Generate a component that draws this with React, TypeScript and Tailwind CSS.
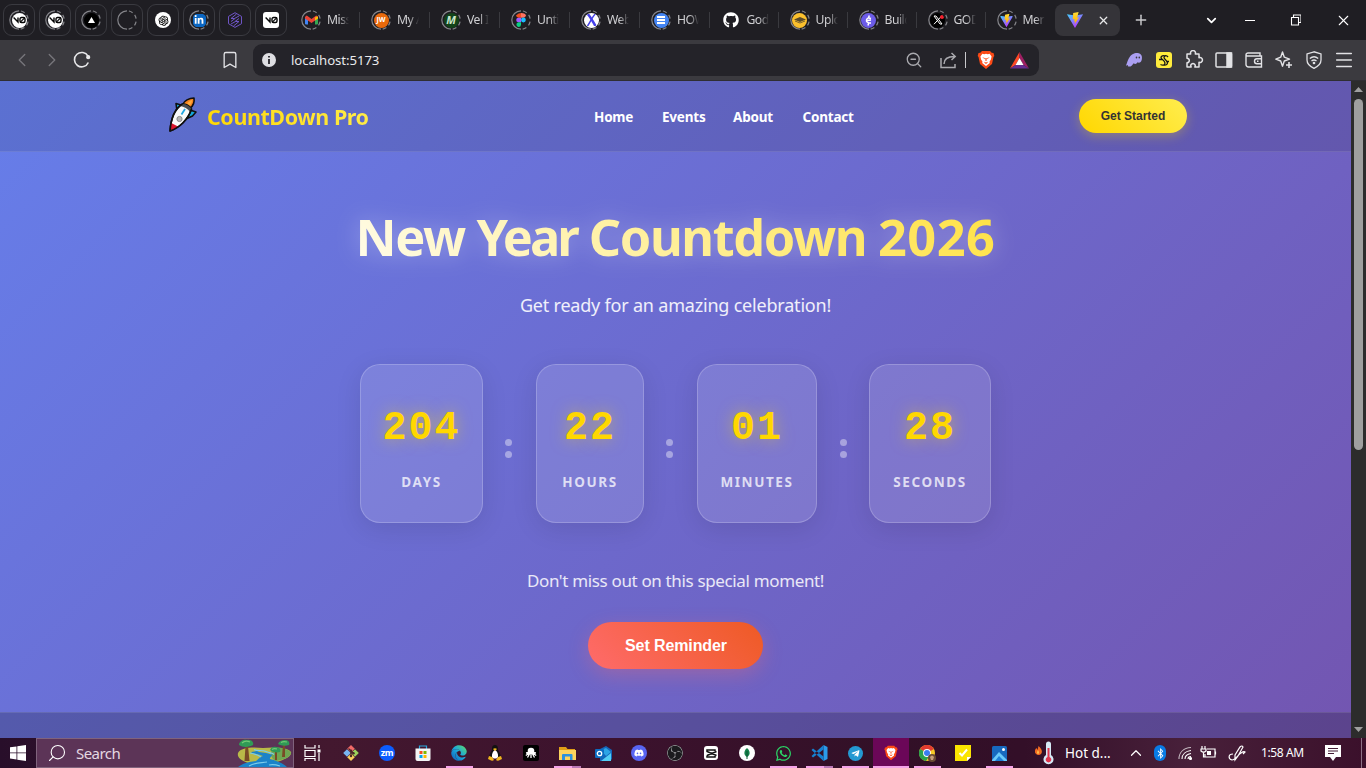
import React from "react";
import { Bookmark, ChevronLeft, ChevronRight, ChevronDown, ChevronUp, X, Plus, ZoomOut, Menu, Search } from "lucide-react";
import { FaGithub, FaLinkedinIn, FaWhatsapp, FaTelegramPlane, FaDiscord, FaBluetoothB, FaEdge } from "react-icons/fa";
import { AiOutlineOpenAI } from "react-icons/ai";
import { SiObsstudio } from "react-icons/si";

const SANS = "font-['Noto_Sans','Open_Sans',sans-serif]";

function Ring({ children }: { children?: React.ReactNode }) {
  return (
    <span className="relative flex h-5 w-5 shrink-0 items-center justify-center">
      <svg className="absolute inset-0" width="20" height="20" viewBox="0 0 20 20" fill="none" stroke="#85858a" strokeWidth="1.2">
        <path d="M10 .8a9.2 9.2 0 0 0 0 18.4" />
        <path d="M10 .8a9.2 9.2 0 0 1 0 18.4" strokeDasharray="4 3" strokeDashoffset="-2" />
      </svg>
      <span className="relative flex h-[15px] w-[15px] items-center justify-center overflow-hidden rounded-full">{children}</span>
    </span>
  );
}

function V0() {
  return (
    <svg width="13" height="8" viewBox="0 0 13 8" fill="none" stroke="#050505" strokeWidth="1.400">
      <path d="M.6 1.500 5 6V1.500" />
      <rect x="7" y="1.500" width="5" height="5" rx="1.500" />
      <path d="m7.300 6.200 4.400-4.400" strokeWidth="1.200" />
    </svg>
  );
}

function Vite({ size = 18 }: { size?: number }) {
  return (
    <svg width={size} height={size} viewBox="0 0 20 20">
      <defs>
        <linearGradient id="vg" x1="0" y1="0" x2=".6" y2="1"><stop stopColor="#41d1ff" /><stop offset="1" stopColor="#bd34fe" /></linearGradient>
        <linearGradient id="vy" x1="0" y1="0" x2="0" y2="1"><stop stopColor="#ffdd35" /><stop offset="1" stopColor="#ffa800" /></linearGradient>
      </defs>
      <path d="M1 3.500 10 5l9-1.500L10 19z" fill="url(#vg)" />
      <path d="m14 1-6 1.200-.5 7 2-.4-.6 3 1.300-.4-.7 3.200L14.500 7l-2.200.4z" fill="url(#vy)" />
    </svg>
  );
}

function BraveLion({ size = 20 }: { size?: number }) {
  return (
    <svg width={size} height={size} viewBox="0 0 20 20">
      <path d="M6 1h8l1.700 1.800L17.500 3l.8 3-.8 1-1.500 7L10 19l-6-5-1.500-7-.8-1 .8-3 1.800-.2z" fill="#fb4a16" />
      <path d="m6.400 3.800 1.800.5L10 3.800l1.800.5 1.800-.5 2 2.600-.7 3.100-1.400 2.300.3 1.200L10 16l-3.800-3 .3-1.200-1.400-2.300-.7-3.100z" fill="#fff" />
      <path d="m6.200 7.300 2.500.7.200 1.200zM13.800 7.300l-2.500.7-.2 1.200zM9.300 8h1.400l-.2 3h-1zM8 11.700l2 .9 2-.9-.8 1.300-1.200.9-1.200-.9z" fill="#fb4a16" />
    </svg>
  );
}

function Pin({ children }: { children?: React.ReactNode }) {
  return <div className="flex h-8 w-8 items-center justify-center rounded-[9px] border border-[#3a3a40]">{children}</div>;
}

function Tab({ label, children, wide, last }: { label: string; children: React.ReactNode; wide?: boolean; last?: boolean }) {
  return (
    <div className={(wide ? "w-[70px]" : "w-[69px]") + " flex h-10 shrink-0 items-center pl-[11px]"}>
      {children}
      <span className="ml-[6px] w-[22px] overflow-hidden whitespace-nowrap text-[12.2px] tracking-[-0.500px] text-[#cfcfd2] [mask-image:linear-gradient(90deg,black_55%,transparent)]">{label}</span>
      {!last && <span className="ml-auto h-4 w-px bg-[#3a3a3f]" />}
    </div>
  );
}

function TabStrip() {
  return (
    <div className="flex h-10 bg-[#1f1e23]">
      <div className="flex items-center gap-1 pl-[3px]">
        <Pin><Ring><span className="flex h-full w-full items-center justify-center bg-white"><V0 /></span></Ring></Pin>
        <Pin><Ring><span className="flex h-full w-full items-center justify-center bg-white"><V0 /></span></Ring></Pin>
        <Pin><Ring><span className="flex h-full w-full items-center justify-center bg-black"><svg width="7" height="6"><path d="M3.500 0 7 6H0z" fill="#fff" /></svg></span></Ring></Pin>
        <Pin><Ring /></Pin>
        <Pin><span className="flex h-4 w-4 items-center justify-center rounded-full bg-white text-[13px] text-black"><AiOutlineOpenAI /></span></Pin>
        <Pin><Ring><span className="flex h-[13px] w-[13px] items-center justify-center rounded-[2px] bg-[#0a66c2] text-[10px] text-white"><FaLinkedinIn /></span></Ring></Pin>
        <Pin>
          <svg width="16" height="16" viewBox="0 0 16 16" fill="none" stroke="#6f55c6" strokeWidth="1"><path d="M8 .7 14.500 4.400v7.300L8 15.400 1.500 11.700V4.400z" /><path d="M9.500 2 4 6.500h3.500L12 4M4 9.500l4-3M12 6.500l-4 3M4 12l4.500-2.500H12L6.500 14" /></svg>
        </Pin>
        <Pin><span className="flex h-4 w-4 items-center justify-center rounded-[3px] bg-white"><V0 /></span></Pin>
      </div>
      <div className="flex pl-[3px]">
        <Tab wide label="Miss">
          <Ring><svg width="13" height="11" viewBox="0 0 13 11"><path d="M0 2v7.500h3V4.500z" fill="#4285f4" /><path d="M13 2v7.500h-3V4.500z" fill="#34a853" /><path d="M0 1.500 1.800.5 6.500 4 11.200.5 13 1.500v2L6.500 8 0 3.500z" fill="#ea4335" /><path d="M10 2.500 13 1v2.500L10 5.500z" fill="#fbbc04" /></svg></Ring>
        </Tab>
        <Tab wide label="My A"><Ring><span className="flex h-full w-full items-center justify-center bg-[#e8690b] text-[7px] font-bold text-white">JW</span></Ring></Tab>
        <Tab wide label="Vel I"><Ring><span className="flex h-full w-full items-center justify-center bg-[#124319] text-[11px] font-bold italic text-[#cce6cc]">M</span></Ring></Tab>
        <Tab wide label="Unti">
          <Ring><svg width="10" height="14" viewBox="0 0 10 14"><path d="M5 0H2.500a2.300 2.300 0 0 0 0 4.700H5z" fill="#f24e1e" /><path d="M5 0h2.500a2.300 2.300 0 0 1 0 4.700H5z" fill="#ff7262" /><path d="M5 4.700H2.500a2.300 2.300 0 0 0 0 4.600H5z" fill="#a259ff" /><circle cx="7.400" cy="7" r="2.400" fill="#1abcfe" /><path d="M5 9.300H2.500A2.300 2.300 0 1 0 5 11.700z" fill="#0acf83" /></svg></Ring>
        </Tab>
        <Tab wide label="Web"><Ring><span className="flex h-full w-full items-center justify-center bg-white"><svg width="11" height="12" viewBox="0 0 11 12" fill="none" stroke="#4540e8"><path d="M1.500 0c2 1 6 9 8 12" strokeWidth="2.500" /><path d="M9.500 0c-3 2-5 8-8 12" strokeWidth="1.500" /></svg></span></Ring></Tab>
        <Tab wide label="HOW"><Ring><span className="flex h-full w-full flex-col items-center justify-center gap-[1.500px] bg-[#4485f4]"><i className="h-[1.500px] w-2 bg-white" /><i className="h-[1.500px] w-2 bg-white" /><i className="h-[1.500px] w-2 bg-white" /></span></Ring></Tab>
        <div className="-ml-[0.500px] flex">
          <Tab label="God"><FaGithub className="mx-[2px] h-4 w-4 shrink-0 text-white" /></Tab>
          <Tab label="Uplo"><Ring><span className="flex h-full w-full items-center justify-center bg-[#fbc02d]"><svg width="12" height="8"><path d="M0 3.500 6 1l6 2.500L6 6z" fill="#5b4b2a" /><path d="m1 5 5 2 5-2" stroke="#796432" fill="none" /></svg></span></Ring></Tab>
          <Tab label="Build"><Ring><span className="flex h-full w-full items-center justify-center bg-[#6c5ce7]"><svg width="7" height="11" viewBox="0 0 7 11" fill="none" stroke="#fff" strokeWidth="1.500"><path d="M6 3.500q-4-1.500-4.500 1.500T6 8M1.500 5.800 6 5M4.300.5 3.500 3M3.500 8.300 3 10.500" /></svg></span></Ring></Tab>
          <Tab label="GOD"><Ring><span className="relative flex h-full w-full items-center justify-center bg-black text-white"><svg width="10" height="10" viewBox="0 0 10 10" fill="none" stroke="#fff"><path d="M1 1h2l6 8H7zM1 9.200 8.800.8" /></svg><i className="absolute right-[1px] top-[2px] h-1 w-1 rounded-full bg-[#f4212e]" /></span></Ring></Tab>
          <Tab last label="Mer"><Ring><Vite size={15} /></Ring></Tab>
        </div>
      </div>
      <div className="my-1 ml-[0.500px] flex w-[65px] shrink-0 items-center rounded-lg bg-[#353439] pl-[11px]">
        <Vite size={18} />
        <X className="ml-[13px] text-[#e8e8ea]" size={13} strokeWidth={2.400} />
      </div>
      <div className="flex flex-1 items-center text-white">
        <Plus className="ml-[13px] text-[#c9c9cc]" size={16} strokeWidth={2.200} />
        <ChevronDown className="ml-auto mr-[26px]" size={15} strokeWidth={2.800} />
        <span className="mr-[34px] h-px w-[10px] bg-white" />
        <svg className="mr-[34px]" width="12" height="12" fill="none" stroke="#fff" strokeWidth="1.100"><path d="M2.500 3.500h7V11h-7zM4.500 3.500V1H12v7.500H9.500" /></svg>
        <X size={17} strokeWidth={1.500} className="mr-[14px]" />
      </div>
    </div>
  );
}

function ExtSlot({ children }: { children: React.ReactNode }) {
  return <span className="flex w-[30px] items-center justify-center">{children}</span>;
}

function Toolbar() {
  return (
    <div className="flex h-[41px] items-center border-b border-[#2f2e33] bg-[#3b3a3f] text-[#e2e2e5]">
      <div className="flex w-[97px] items-center pl-[7px]">
        <ExtSlot><ChevronLeft className="text-[#77767b]" size={22} strokeWidth={1.500} /></ExtSlot>
        <ExtSlot><ChevronRight className="text-[#77767b]" size={22} strokeWidth={1.500} /></ExtSlot>
        <ExtSlot><svg width="18" height="18" viewBox="0 0 18 18" fill="none" stroke="#e8e8ea" strokeWidth="1.600"><path d="M15.300 11.500A7.200 7.200 0 1 1 15 5.200" /><circle cx="15.200" cy="6.200" r="1.300" fill="#e8e8ea" /></svg></ExtSlot>
      </div>
      <div className="flex w-[156px] justify-end pr-[13px]"><Bookmark size={20} strokeWidth={1.600} /></div>
      <div className="flex h-8 w-[786px] items-center rounded-[9px] bg-[#242329] pl-[9px]">
        <span className="flex h-[14px] w-[14px] items-center justify-center rounded-full bg-[#dedee2]"><svg width="2" height="8"><path d="M0 0h2v1.600H0zM0 3h2v5H0z" fill="#35343a" /></svg></span>
        <span className="ml-[15px] mt-px whitespace-nowrap text-[13.200px] tracking-[-0.080px] text-[#e9e9ec]">localhost:5173</span>
        <ZoomOut className="ml-auto text-[#aaaaaf]" size={18} strokeWidth={1.700} />
        <svg className="ml-[17px]" width="17" height="17" viewBox="0 0 17 17" fill="none" stroke="#aaaaaf" strokeWidth="1.500"><path d="M1 6v9.500h14V12M4 12c0-5 3-7.500 10.500-7.500M11.500 1l3.700 3.500L11.500 8" /></svg>
        <span className="ml-[8px] h-4 w-px bg-[#c8c8cc]" />
        <span className="ml-[10px]"><BraveLion size={20} /></span>
        <svg className="ml-[14px] mr-[10px]" width="19" height="17" viewBox="0 0 19 17"><path d="M9.500 0v6L5.500 13 0 16.500z" fill="#ff4724" /><path d="M9.500 0 19 16.500 13.500 13 9.500 6z" fill="#9e1f63" /><path d="M0 16.500 5.500 13h8l5.500 3.500z" fill="#662d91" /><path d="m9.500 6 4 7h-8z" fill="#fff" /></svg>
      </div>
      <div className="ml-auto mr-[7px] flex items-center">
        <ExtSlot><svg width="18" height="16" viewBox="0 0 18 16"><path d="M1 13.500C2 11 2.500 9 3.500 7 6 2 9.500.8 12.500 1c4 .3 5 3.500 4.300 6.500-.6 3-2.800 4-4.300 2.800-1 1.900-2.700 2-3.800.9-1.500 2.300-3.200 3.800-5.200 3.300-1-.3-.5-1.200-.9-1.500-.5-.2-1.300 1.200-1.600.5z" fill="#ab9ff2" /><ellipse cx="11.500" cy="5.500" rx=".8" ry="1.100" fill="#3b3a3f" /><ellipse cx="14.300" cy="5.500" rx=".8" ry="1.100" fill="#3b3a3f" /></svg></ExtSlot>
        <ExtSlot><span className="flex h-4 w-4 items-center justify-center rounded-[3px] bg-[#ffec3d]"><svg width="12" height="13" viewBox="0 0 12 13" fill="none" stroke="#171717" strokeWidth="1.300"><path d="M7.500 2.500C5.500 1 3 1.800 3 3.500S7 6.500 7 9 4.500 11.500 2.500 10.500M10 3C8.500 1 6 1.500 6 3.500s3.500 3 3.500 5.200-2 2.600-3.500 2.300M1 5.500h3M8 7.500h3" /></svg></span></ExtSlot>
        <ExtSlot><svg width="20" height="20" viewBox="0 0 20 20" fill="none" stroke="#e2e2e5" strokeWidth="1.500" strokeLinejoin="round"><path d="M3 4H6.700a2.500 2.500 0 1 1 4.600 0H15v3.700a2.500 2.500 0 1 1 0 4.600V17H10.800a2.200 2.200 0 1 0-3.600 0H3V12.800a2.300 2.300 0 1 0 0-4.600z" /></svg></ExtSlot>
        <ExtSlot><svg width="18" height="16" fill="none" stroke="#e2e2e5" strokeWidth="1.500"><rect x="1" y="1" width="15.500" height="14" rx="1" /><path d="M12 1h4.500v14H12z" fill="#e2e2e5" /></svg></ExtSlot>
        <ExtSlot><svg width="18" height="16" viewBox="0 0 18 16" fill="none" stroke="#e2e2e5" strokeWidth="1.400"><path d="M15 4V1H3a2 2 0 0 0-2 2v9.500A2.500 2.500 0 0 0 3.500 15h13V4H3a1.800 1.800 0 0 1-2-1.500M17 6.700h-5a2.500 2.500 0 0 0 0 5h5M12 9.200h1.500" /></svg></ExtSlot>
        <ExtSlot><svg width="18" height="18" viewBox="0 0 18 18" fill="none" stroke="#e2e2e5" strokeWidth="1.400" strokeLinejoin="round"><path d="M7.500 1 9.300 6.200 14.500 8.200 9.300 10 7.500 15.200 5.700 10 .8 8.200 5.700 6.200z" /><path d="M14 11v6M11 14h6" strokeWidth="1.600" /></svg></ExtSlot>
        <ExtSlot><svg width="18" height="18" viewBox="0 0 18 18" fill="none" stroke="#e2e2e5" strokeWidth="1.300"><path d="M9 .8 2 3v6c0 4 3 6.500 7 8.300 4-1.800 7-4.300 7-8.300V3zM4.800 7.500c2.500-2 6-2 8.400 0M6.500 10c1.500-1.200 3.500-1.200 5 0" /><circle cx="9" cy="12" r=".7" fill="#e2e2e5" /></svg></ExtSlot>
        <ExtSlot><Menu size={22} strokeWidth={1.600} className="shrink-0" /></ExtSlot>
      </div>
    </div>
  );
}

function Rocket() {
  return (
    <svg width="30" height="36" viewBox="0 0 30 36" stroke="#101010" strokeWidth="1.600" strokeLinejoin="round">
      <path d="M15 7c1-3 6-6 11-6 .5 3.500 0 7.500-4 10z" fill="#f7831d" />
      <path d="M19 7c1-2 3-3.500 5-4 0 2-.5 4-2.500 5.500z" fill="#ffab3d" stroke="none" />
      <path d="M13 8 8 6.500 9 14zM22 13l6 2-3.500 4-5.500 2.500z" fill="#13a8dc" />
      <path d="M14.500 7C8 11 3 20 2 34c9-3 18-11 21.500-22-2-3-5-5-9-5z" fill="#fafafa" />
      <path d="M3.300 26c-.8 3-1.200 5-1.300 8 3-1.200 5-2.200 8-4.500z" fill="#d9152c" stroke="none" />
      <path d="M14.500 7c4 0 7.500 2 9 5L22 15c-2-3.500-6-5.500-10-6z" fill="#4a4d50" stroke="none" />
      <path d="m17 12-3.500 5.500" stroke="#20a6e0" strokeWidth="1.800" />
      <circle cx="11.500" cy="22" r="2.600" fill="#b5b5b5" stroke="#8a8a8a" strokeWidth="1" />
      <path d="M14.500 7C8 11 3 20 2 34c9-3 18-11 21.500-22" fill="none" />
    </svg>
  );
}

function Unit({ value, label, width }: { value: string; label: string; width: string }) {
  return (
    <div className={width + " flex h-[159px] shrink-0 flex-col items-center rounded-[20px] border border-white/20 bg-white/12 pt-[41px] shadow-[0_6px_26px_rgba(0,0,0,0.1)]"}>
      <div className="font-['Liberation_Mono',monospace] text-[40px] font-bold leading-[46px] tracking-[2px] text-[#ffd700] [text-shadow:0_0_16px_rgba(255,215,0,0.5)]">{value}</div>
      <div className="mt-[20px] whitespace-nowrap text-[13.500px] font-bold leading-[20px] tracking-[1.600px] text-white/75">{label}</div>
    </div>
  );
}

function Sep({ width = "w-[53px]", dots = "pr-[2px]" }: { width?: string; dots?: string }) {
  return (
    <div className={width + " " + dots + " flex h-[159px] flex-col items-center gap-[5px] pt-[75px]"}>
      <i className="h-[7px] w-[7px] rounded-full bg-white/40" />
      <i className="h-[7px] w-[7px] rounded-full bg-white/40" />
    </div>
  );
}

function Page() {
  return (
    <div className="flex h-[657px] w-[1351px] flex-col overflow-hidden bg-[linear-gradient(135deg,#667eea_0%,#764ba2_100%)] bg-[length:1351px_1168px]">
      <header className="flex h-[71px] shrink-0 items-center border-b border-white/10 bg-black/10 pl-[168px] pr-[164px]">
        <span className="-mt-[2px]"><Rocket /></span>
        <span className="ml-[9px] mt-[2px] w-[387px] whitespace-nowrap bg-[linear-gradient(45deg,#ffd700,#ffed4e)] bg-[length:162px_100%] bg-clip-text text-[21.500px] font-bold leading-8 tracking-[-0.430px] text-transparent">CountDown Pro</span>
        <nav className="mt-[3px] flex text-[13.500px] font-bold tracking-[-0.200px] text-white">
          <span className="w-[68px]">Home</span>
          <span className="w-[71px]">Events</span>
          <span className="w-[69.500px]">About</span>
          <span>Contact</span>
        </nav>
        <button className="ml-auto h-[34px] w-[108px] rounded-full bg-[linear-gradient(45deg,#ffd700,#ffed4e)] font-['Liberation_Sans',Arial,sans-serif] text-[12px] font-bold text-[#333] shadow-[0_3px_12px_rgba(255,215,0,0.3)]">Get Started</button>
      </header>
      <main className="flex h-[560px] shrink-0 flex-col items-center">
        <h1 className="mt-[51px] whitespace-nowrap bg-[linear-gradient(45deg,#ffffff_-12%,#ffe03a_105%)] bg-clip-text text-[50.500px] font-bold leading-[68px] tracking-[-1.400px] text-transparent [filter:drop-shadow(0_0_12px_rgba(255,255,255,0.32))]">New <span className="tracking-[-2.900px]">Year</span> Countdown <span className="tracking-[0.500px]">2026</span></h1>
        <p className="mt-[20px] whitespace-nowrap text-[18px] leading-[28px] tracking-[-0.200px] text-white/90">Get ready for an amazing celebration!</p>
        <section className="mt-[45px] flex">
          <Unit value="204" label="DAYS" width="w-[123px]" />
          <Sep />
          <Unit value="22" label="HOURS" width="w-[108px]" />
          <Sep />
          <Unit value="01" label="MINUTES" width="w-[120px]" />
          <Sep width="w-[52px]" dots="pr-0" />
          <Unit value="28" label="SECONDS" width="w-[122px]" />
        </section>
        <p className="mt-[44px] whitespace-nowrap text-[17px] leading-[28px] tracking-[-0.350px] text-white/85">Don't miss out on this special moment!</p>
        <button className="mt-[27px] h-[47px] w-[175px] rounded-full bg-[linear-gradient(45deg,#ff6b6b,#ee5a24)] pl-px font-['Liberation_Sans',Arial,sans-serif] text-[16px] font-bold tracking-[-0.100px] text-white shadow-[0_6px_20px_rgba(255,107,107,0.3)]">Set Reminder</button>
      </main>
      <footer className="flex-1 border-t border-white/10 bg-black/20" />
    </div>
  );
}

function Scrollbar() {
  return (
    <div className="flex h-[657px] w-[15px] flex-col items-center bg-[#2c2c2c]">
      <svg width="9" height="18" className="shrink-0"><path d="M4.500 6 9 11H0z" fill="#9f9f9f" /></svg>
      <div className="h-[351px] w-[9px] rounded-full bg-[#9f9f9f]" />
      <svg width="9" height="18" className="mt-auto shrink-0"><path d="M0 7h9l-4.500 5z" fill="#9f9f9f" /></svg>
    </div>
  );
}

function TaskItem({ children, line, active }: { children: React.ReactNode; line?: "one" | "two"; active?: boolean }) {
  return (
    <div className={(active ? "bg-[#6b0758]" : "") + " relative flex h-[30px] w-9 items-center justify-center"}>
      {children}
      {line && (
        <span className={(active ? "inset-x-0" : "inset-x-[4.500px]") + " absolute bottom-0 flex h-[2px]"}>
          <i className="h-full flex-1 bg-[#f4a3e8]" />
          {line === "two" && <i className="h-full w-[9px] bg-[#b978b6]" />}
        </span>
      )}
    </div>
  );
}

function Taskbar() {
  return (
    <div className="flex h-[30px] items-center bg-[linear-gradient(90deg,#280e2a_0%,#43182f_24%,#3c122d_45%,#321027_65%,#330f28_75%,#48203a_87%,#3b102b_100%)] text-white">
      <div className="flex w-[36px] justify-center"><svg width="16" height="16" viewBox="0 0 16 16" fill="#fff"><path d="M0 2.300 6.500 1.400v6H0zM7.300 1.300 16 0v7.400H7.300zM0 8.200h6.500v6.300L0 13.600zM7.300 8.200H16V16l-8.700-1.300z" /></svg></div>
      <div className="flex h-[30px] w-[258px] items-center overflow-hidden border border-[#80637d] bg-[#5c3457] pl-[10px]">
        <Search size={20} strokeWidth={1.300} className="-scale-x-100 text-white" />
        <span className="ml-[9px] mt-px text-[15px] tracking-[-0.550px] text-[#e4d8e1]">Search</span>
        <svg className="ml-auto shrink-0" width="56" height="30" viewBox="0 0 56 30">
          <path d="M1 15C4 9 16 9 26 10c10-1 24-1 28 4 1 4-5 7-11 9-8 3-24 4-32 2C3 22 0 19 1 15z" fill="#b9ba48" />
          <path d="M36 10c9-1 16 1 18 5-1 5-9 7-15 8-6-2-6-10-3-13z" fill="#6fa652" />
          <path d="M0 30c5-5 12-6 19-7 3-2 3-4 7-5-4-2-10-2-12-4l6-1c2 2 8 1 13 3 5 1-1 3 0 5 8 2 14 5 18 9z" fill="#1b83c9" />
          <path d="M17 11.500c4 2 8 0 12 2s6 1 8 3M13 15c5 1 8 2 11 4M12 28c6-4 12-3 18-4M32 27c4-1 8 0 11 1" stroke="#7bcceb" strokeWidth="1.200" fill="none" />
          <path d="M8.500 8h2.500l1.500 15H7.500zM46 6h2v13h-3zM38 14h2v8h-2z" fill="#794b26" />
          <path d="M2 7c0-4 5-6 8-5 5-1 7 3 6 5-3 2-10 3-14 0zM41 6c1-3 4-4 7-4 4 0 5 3 4 5-3 1-8 1-11-1zM33 12c1-3 4-4 6-3 4 0 5 3 4 5-3 1-8 0-10-2z" fill="#2f9a56" />
          <path d="M5 5c3-3 6-2 8-1M44 4.500c2-1.500 4-1 6-.5M35 11.500c2-1.500 3-1 5-.5" stroke="#72c775" strokeWidth="1.200" fill="none" />
        </svg>
      </div>
      <div className="flex w-[39px] justify-center pr-[2px]"><svg width="17" height="16" fill="none" stroke="#fff" strokeWidth="1.200"><path d="M1 0v3h10V0M1 5.500h10v6H1zM1 16v-2.500h10V16M15 0v3M15 8v8" /><path d="M13.500 4.500h3v3h-3z" fill="#fff" stroke="none" /></svg></div>
      <TaskItem><svg width="16" height="16" viewBox="0 0 16 16"><path d="m8 0 3.800 3.800L8 7.600 4.200 3.800z" fill="#f36a68" /><path d="m4 4.200 3.800 3.800L4 11.800.2 8z" fill="#79b5f1" /><path d="m12 4.200 3.800 3.800-3.800 3.800L8.200 8z" fill="#9bd15c" /><path d="m8 8.400 3.800 3.800L8 16l-3.800-3.800z" fill="#f7ce5c" /><path d="m5.500 3.500 5 5M8 5.500V11" stroke="#4a2426" strokeWidth="1.200" fill="none" /><circle cx="8" cy="5.800" r="1.200" fill="#4a2426" /><circle cx="10.500" cy="8.300" r="1.200" fill="#4a2426" /><circle cx="8" cy="11" r="1.200" fill="#4a2426" /></svg></TaskItem>
      <TaskItem><span className="flex h-4 w-4 items-center justify-center rounded-full bg-[#0b5cff] pb-px text-[9px] font-bold tracking-[-0.300px]">zm</span></TaskItem>
      <TaskItem><svg width="16" height="16" viewBox="0 0 16 16"><path d="M4.500 4V1h7v3" fill="none" stroke="#29a9e0" strokeWidth="1.200" /><path d="M.5 3.500h15V14a2 2 0 0 1-2 2h-11a2 2 0 0 1-2-2z" fill="#f4f5f6" /><path d="M4.500 6h3v3h-3z" fill="#f25022" /><path d="M8.500 6h3v3h-3z" fill="#7fba00" /><path d="M4.500 10h3v3h-3z" fill="#00a4ef" /><path d="M8.500 10h3v3h-3z" fill="#ffb900" /></svg></TaskItem>
      <TaskItem line="one">
        <svg width="0" height="0" className="absolute"><defs><linearGradient id="edge" x1="0" y1="1" x2="1" y2="0"><stop stopColor="#1058b8" /><stop offset=".5" stopColor="#1aa6dc" /><stop offset="1" stopColor="#62dd64" /></linearGradient></defs></svg>
        <FaEdge size={16} fill="url(#edge)" />
      </TaskItem>
      <TaskItem><svg width="14" height="16" viewBox="0 0 14 16"><path d="M7 0c3 0 3 3 3 5 1 2 3 4 2.500 8H1.500C1 9 3 7 4 5c0-2 0-5 3-5z" fill="#111" /><path d="M7 5c2 1 3.500 4 3 7-1 2-5 2-6 0-.5-3 1-6 3-7z" fill="#fff" /><path d="M5 4c1-1 3-1 4 0L7 6zM1 11l3 1 2 3c-2 1.500-4 0-6-1zM13 11l-3 1-2 3c2 1.500 4 0 6-1z" fill="#f2b61d" /></svg></TaskItem>
      <TaskItem><span className="flex h-4 w-4 items-center justify-center rounded-[2px] bg-black"><svg width="12" height="12" viewBox="0 0 12 12"><circle cx="6" cy="4" r="3.300" fill="#fff" /><path d="M6 6v5M5 6 2.500 10.500M7 6l2.500 4.500M4.500 6 .8 8.500M7.500 6l3.700 2.500M4.500 5.500 1 6M7.500 5.500 11 6" stroke="#fff" strokeWidth="1.300" /></svg></span></TaskItem>
      <TaskItem line="two"><svg width="17" height="15" viewBox="0 0 17 15"><path d="M0 1h7l1.500 2H16v6H0z" fill="#e09f17" /><path d="M0 4h17v10H0z" fill="#fbd35e" /><path d="M3 14V9q0-1 1-1h8.500q1 0 1 1v5H11v-3.500H6V14z" fill="#2a91df" /></svg></TaskItem>
      <TaskItem><svg width="17" height="15" viewBox="0 0 17 15"><path d="m5 3 6-3 6 4v9l-2 2H5z" fill="#1565b8" /><path d="m6 4 5-2 5 4-5 4z" fill="#2ca5e6" /><path d="m6 15 10-8v8z" fill="#53cff5" /><rect y="3" width="9" height="9" rx="1" fill="#0c6cc1" /><circle cx="4.500" cy="7.500" r="2.200" fill="none" stroke="#fff" strokeWidth="1.300" /></svg></TaskItem>
      <TaskItem><span className="flex h-4 w-4 items-center justify-center rounded-full bg-[#5865f2] text-[10px]"><FaDiscord /></span></TaskItem>
      <TaskItem><SiObsstudio size={16} className="rounded-full bg-[#1b1b1e] text-[#aaa9ac]" /></TaskItem>
      <TaskItem><span className="flex h-[14px] w-[14px] items-center justify-center rounded-[3px] bg-white"><svg width="11" height="9" fill="none" stroke="#111" strokeWidth="1.500"><path d="M9 2V1H1v1.500l9.500 4M1 6.500V8h8V7M1 6.500l9.500-4" /></svg></span></TaskItem>
      <TaskItem><span className="flex h-4 w-4 items-center justify-center rounded-full bg-white"><svg width="6" height="11"><path d="M3 0c4 4 3 7 0 9C0 7-1 4 3 0z" fill="#14804a" /><path d="M3 3v8" stroke="#0b5532" /></svg></span></TaskItem>
      <TaskItem line="one"><FaWhatsapp size={17} className="text-[#2bd365]" /></TaskItem>
      <TaskItem line="two"><svg width="17" height="16" viewBox="0 0 17 16"><path d="m12.500 0 4 2v12l-4 2z" fill="#2b9bea" /><path d="M12.500 0v4.500L2 12.500.5 11zM12.500 16v-4.500L2 3.500.5 5z" fill="#1681d1" /></svg></TaskItem>
      <TaskItem line="one"><span className="flex h-[15px] w-[15px] items-center justify-center rounded-full bg-[#2499d2] text-[9px]"><FaTelegramPlane /></span></TaskItem>
      <TaskItem line="one" active><BraveLion size={16} /></TaskItem>
      <TaskItem line="one"><svg width="17" height="17" viewBox="0 0 17 17"><circle cx="8" cy="8" r="8" fill="#f8c927" /><path d="M8 8 1 4A8 8 0 0 1 15 4z" fill="#e33c30" /><path d="M1 4a8 8 0 0 0 6 12l4-6-3-2z" fill="#2ba24c" /><circle cx="8" cy="8" r="3.900" fill="#fff" /><circle cx="8" cy="8" r="3" fill="#3a7df0" /><circle cx="13" cy="13" r="4" fill="#6a4c36" /><path d="M11 12q2-3 4 0l-1 3h-2z" fill="#c99f7b" /></svg></TaskItem>
      <TaskItem><svg width="16" height="16"><path d="M0 0h16v12l-4 4H0z" fill="#fbe400" /><path d="M12 16v-4h4z" fill="#fff" /><path d="m4.500 8 2.500 2.500 5-6" fill="none" stroke="#fff" strokeWidth="2" /></svg></TaskItem>
      <TaskItem line="one"><svg width="15" height="15" viewBox="0 0 15 15"><rect width="15" height="15" rx="1.500" fill="#1769bf" /><path d="m0 14 7-8 8 8v1H0z" fill="#69c9fa" /><path d="m3 15 4-5 5 5z" fill="#1c7fd8" /><circle cx="11.500" cy="3.500" r="1.500" fill="#fff" /></svg></TaskItem>
      <div className="ml-[18px] flex items-center">
        <svg width="20" height="24" viewBox="0 0 20 24"><path d="M3.500 5c5 4 4 9 0 9-4.500-.5-4.500-5-2-7l1 2z" fill="#f26a22" /><path d="M3 9q2 3 0 4-2-1 0-4z" fill="#ffc34a" /><path d="M11 3a2.500 2.500 0 0 1 5 0v11a5 5 0 1 1-5 0z" fill="#d6eaf7" /><path d="M12.500 7h2v9a2.800 2.800 0 1 1-2 0z" fill="#e0354d" /></svg>
        <span className="ml-[10px] w-[46px] whitespace-nowrap text-[13.500px]">Hot d...</span>
      </div>
      <ChevronUp className="ml-[16px]" size={18} strokeWidth={1.600} />
      <span className="ml-[9px] flex h-4 w-3 items-center justify-center rounded-full bg-[#087be5] text-[11px]"><FaBluetoothB /></span>
      <svg className="ml-[12px]" width="14" height="14" viewBox="0 0 14 14" fill="none" stroke="#fff" strokeWidth="1.100"><path d="M1 13C1 6 6 2 13 1.500" opacity=".7" /><path d="M4 13c0-5 4-8 9-8.500M7 13c0-3 3-5 6-5.500M10 13c0-1.500 1.500-2.500 3-2.500" /><circle cx="12.500" cy="12.500" r="1" fill="#fff" /></svg>
      <svg className="ml-[8px]" width="17" height="14" fill="none" stroke="#fff" strokeWidth="1.200"><path d="M7 3h8v8H5V8M15.500 5.500v3M2 0v3M5 0v3M1 3h5v2q-2.500 2.500-5 0zM3.500 6v5H6" /><path d="M7 5h4v4H7z" fill="#fff" stroke="none" /></svg>
      <svg className="ml-[11px]" width="18" height="17" viewBox="0 0 18 17" fill="none" stroke="#fff" strokeWidth="1.200"><path d="M7 10 12 2q2-2 3 0L10 11l-3 4zM5 9c-5 0-5 5-1 6 3 0 6-5 9-7q3-2 4-1l-2 2" /></svg>
      <span className="ml-[15px] w-[44px] whitespace-nowrap text-[12px] tracking-[-0.400px]">1:58 AM</span>
      <svg className="ml-[20px]" width="17" height="16"><path d="M0 0h16v12h-5l-3 4-3-4H0z" fill="#fff" /><path d="M3 3.500h10M3 6h10M3 8.500h6" stroke="#421b34" /></svg>
      <span className="ml-auto mr-1 h-[30px] w-px bg-[#8d7186]" />
    </div>
  );
}

export default function App() {
  return (
    <div className={SANS + " h-[768px] w-[1366px] overflow-hidden bg-[#1f1e23]"}>
      <TabStrip />
      <Toolbar />
      <div className="flex">
        <Page />
        <Scrollbar />
      </div>
      <Taskbar />
    </div>
  );
}
